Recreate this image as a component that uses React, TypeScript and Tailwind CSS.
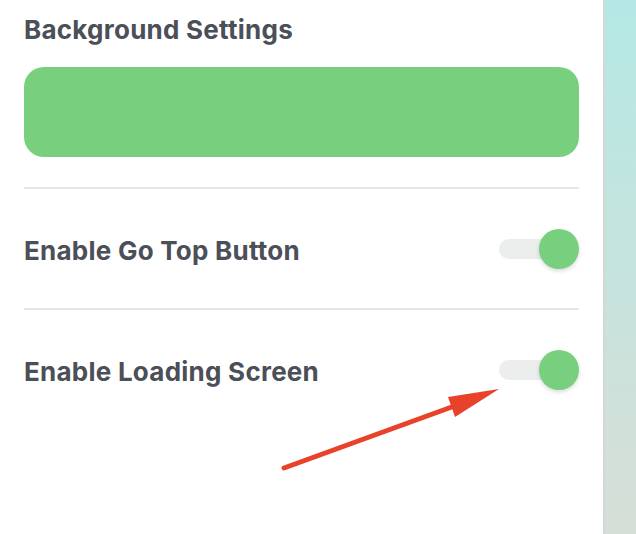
import { useState } from "react";

const Toggle = ({ on, onChange }: { on: boolean; onChange: () => void }) => (
  <button
    onClick={onChange}
    className="relative flex h-10 w-[80px] items-center justify-end"
    aria-pressed={on}
  >
    <span className="absolute left-0 h-5 w-[60px] rounded-full bg-[#eceeed]" />
    <span className="relative h-10 w-10 rounded-full bg-[#78d07f] shadow-[0_2px_4px_rgba(0,0,0,0.15)]" />
  </button>
);

const SettingRow = ({ label }: { label: string }) => {
  const [on, setOn] = useState(true);
  return (
    <div className="flex h-[119px] items-center justify-between">
      <span className="mt-1 text-[26px] font-bold tracking-[0.25px] text-[#4b4f58]">{label}</span>
      <Toggle on={on} onChange={() => setOn(!on)} />
    </div>
  );
};

export default function App() {
  return (
    <div
      className="relative flex h-[534px] w-[636px] bg-white"
      style={{ fontFamily: "Inter, 'Noto Sans', sans-serif" }}
    >
      <div className="flex w-[603px] flex-col pl-6 pr-6 pt-[14px]">
        <h2 className="text-[26px] font-bold leading-8 tracking-[0.25px] text-[#4b4f58]">
          Background Settings
        </h2>
        <div className="mt-[21px] h-[90px] w-full rounded-[20px] bg-[#78d07f]" />
        <div className="mt-[30px] h-[2px] w-full bg-[#e6e6e6]" />
        <SettingRow label="Enable Go Top Button" />
        <div className="h-[2px] w-full bg-[#e6e6e6]" />
        <SettingRow label="Enable Loading Screen" />
      </div>
      <div className="w-[2px] bg-[#d6d6d6]" />
      <div className="flex-1 bg-gradient-to-b from-[#b4e8e4] to-[#d6dfd7]" />

      {/* annotation arrow */}
      <svg
        className="pointer-events-none absolute left-0 top-0"
        width="636"
        height="534"
        viewBox="0 0 636 534"
      >
        <line
          x1="284"
          y1="468"
          x2="460"
          y2="404"
          stroke="#e8432a"
          strokeWidth="5"
          strokeLinecap="round"
        />
        <polygon points="499,389 448,397 455,417" fill="#e8432a" />
      </svg>
    </div>
  );
}
